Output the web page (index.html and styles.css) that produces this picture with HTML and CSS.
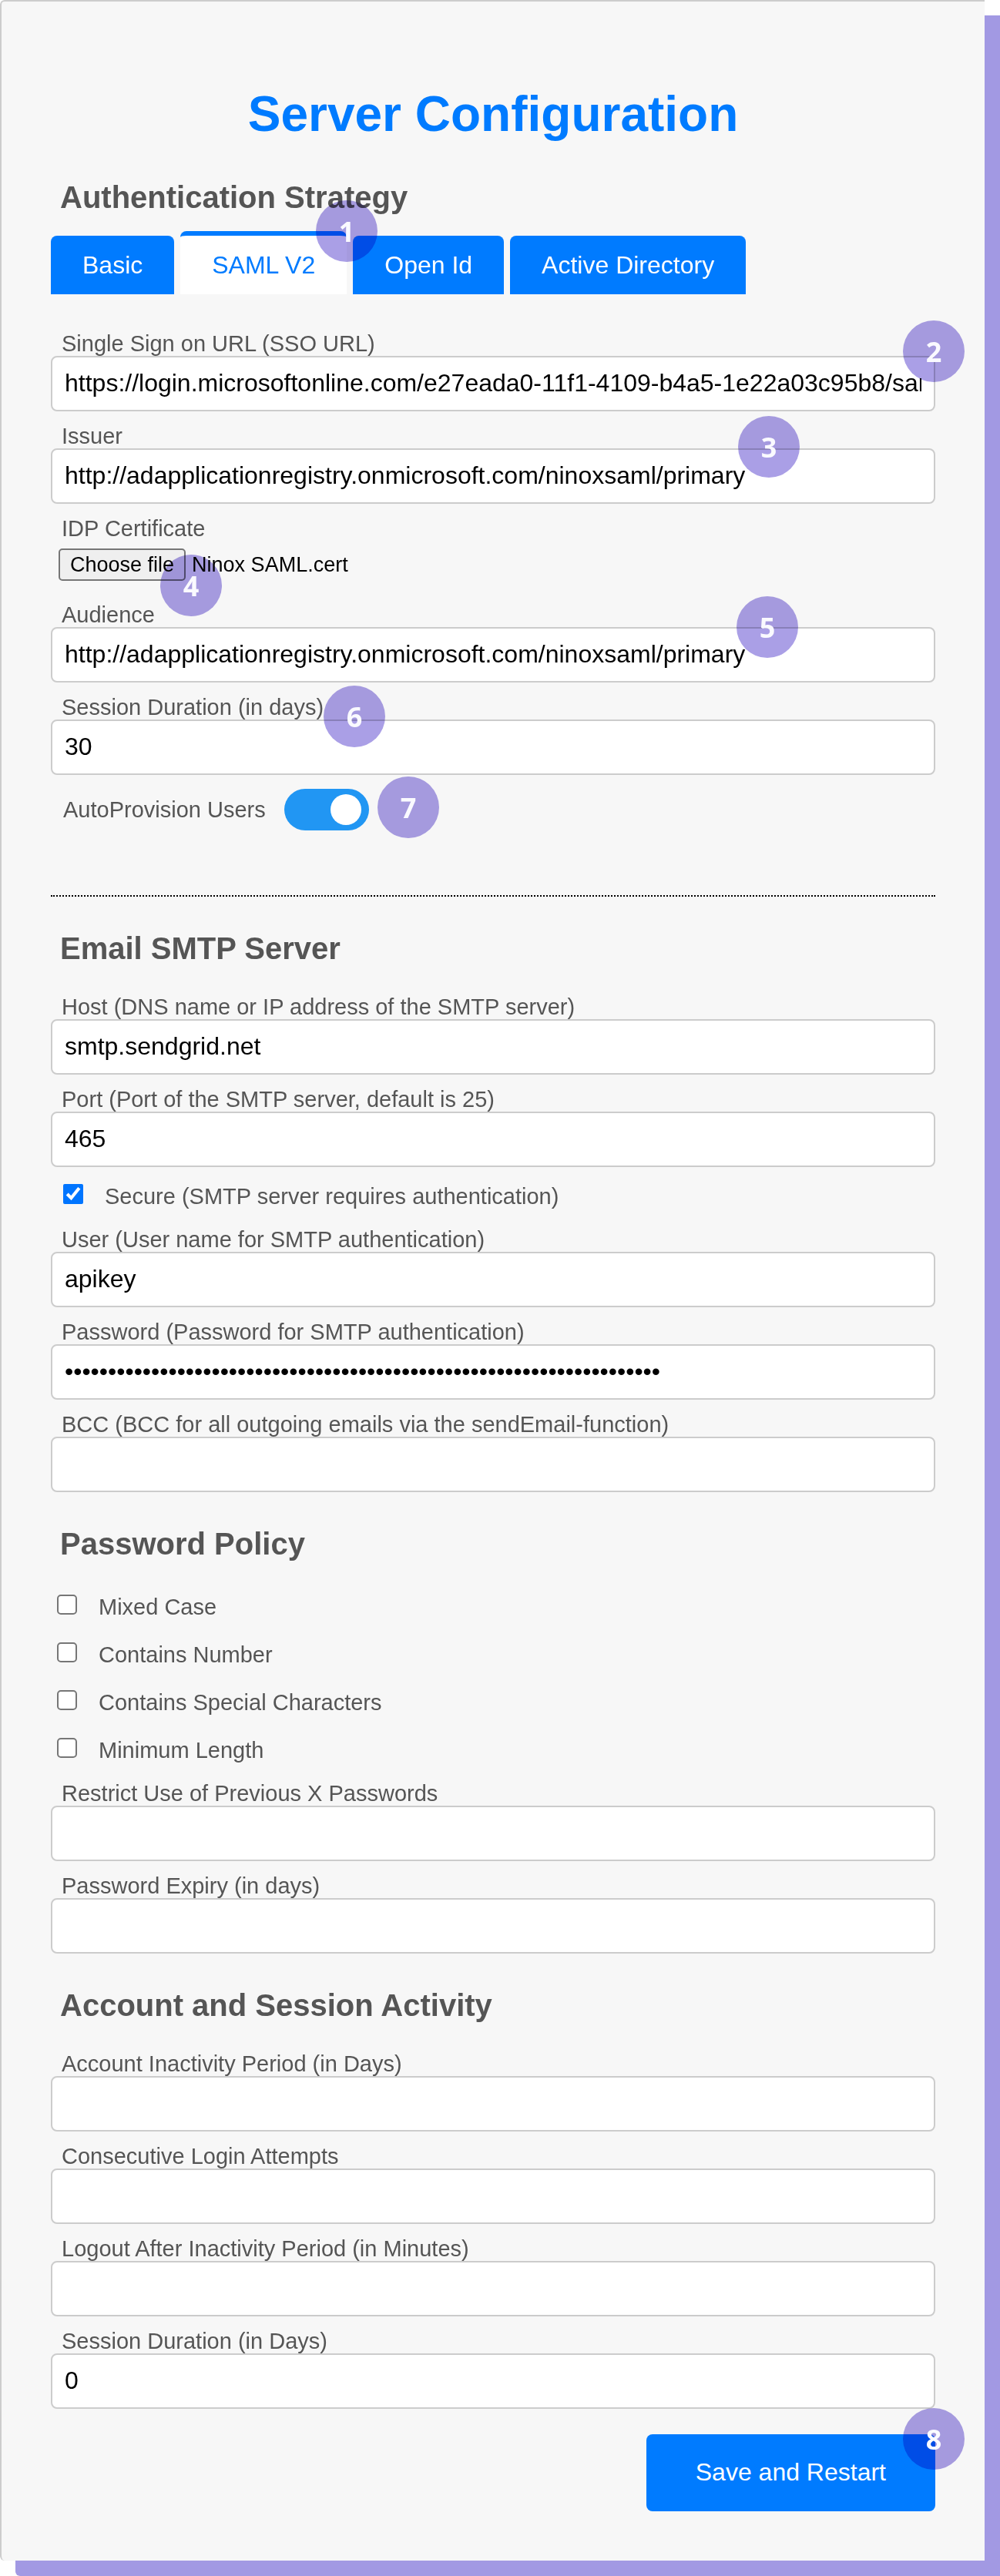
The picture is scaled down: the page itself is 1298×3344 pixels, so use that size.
FILE: index.html
```html
<!DOCTYPE html>
<html lang="en">
  <head>
    <meta charset="UTF-8" />
    <meta name="viewport" content="width=device-width, initial-scale=1.0" />
    <title>Server Configuration</title>
    <link rel="stylesheet" href="styles.css">
  </head>
  <body>
    <form class="card">
      <h1>Server Configuration</h1>

      <h2>Authentication Strategy</h2>
      <div class="tabs">
        <button type="button" class="tab">Basic</button>
        <button type="button" class="tab active">SAML V2</button>
        <button type="button" class="tab">Open Id</button>
        <button type="button" class="tab">Active Directory</button>
        <span class="badge badge-tabs"><b>1</b></span>
      </div>

      <div class="field">
        <label for="ssoUrl">Single Sign on URL (SSO URL)</label>
        <input type="text" id="ssoUrl" value="https://login.microsoftonline.com/e27eada0-11f1-4109-b4a5-1e22a03c95b8/saml2" />
        <span class="badge badge-sso"><b>2</b></span>
      </div>
      <div class="field">
        <label for="issuer">Issuer</label>
        <input type="text" id="issuer" value="http://adapplicationregistry.onmicrosoft.com/ninoxsaml/primary" />
        <span class="badge badge-issuer"><b>3</b></span>
      </div>
      <div class="field">
        <label for="idpCert">IDP Certificate</label>
        <div class="file-row">
          <input type="file" id="idpCert" class="file-input" />
          <label for="idpCert" class="file-btn">Choose file</label>
          <span class="file-name">Ninox SAML.cert</span>
        </div>
        <span class="badge badge-cert"><b>4</b></span>
      </div>
      <div class="field">
        <label for="audience">Audience</label>
        <input type="text" id="audience" value="http://adapplicationregistry.onmicrosoft.com/ninoxsaml/primary" />
        <span class="badge badge-audience"><b>5</b></span>
      </div>
      <div class="field">
        <label for="samlSession">Session Duration (in days)</label>
        <input type="text" id="samlSession" value="30" />
        <span class="badge badge-session"><b>6</b></span>
      </div>
      <div class="switch-row">
        <label for="autoProvision">AutoProvision Users</label>
        <input type="checkbox" id="autoProvision" class="switch" checked />
        <span class="badge badge-provision"><b>7</b></span>
      </div>

      <hr />

      <h2>Email SMTP Server</h2>
      <div class="field">
        <label for="host">Host (DNS name or IP address of the SMTP server)</label>
        <input type="text" id="host" value="smtp.sendgrid.net" />
      </div>
      <div class="field">
        <label for="port">Port (Port of the SMTP server, default is 25)</label>
        <input type="text" id="port" value="465" />
      </div>
      <div class="check-row indent">
        <input type="checkbox" id="secure" checked />
        <label for="secure">Secure (SMTP server requires authentication)</label>
      </div>
      <div class="field">
        <label for="user">User (User name for SMTP authentication)</label>
        <input type="text" id="user" value="apikey" />
      </div>
      <div class="field">
        <label for="password">Password (Password for SMTP authentication)</label>
        <input type="password" id="password" value="123456789012345678901234567890123456789012345678901234567890123456789" />
      </div>
      <div class="field">
        <label for="bcc">BCC (BCC for all outgoing emails via the sendEmail-function)</label>
        <input type="text" id="bcc" />
      </div>

      <h2>Password Policy</h2>
      <div class="check-row">
        <input type="checkbox" id="mixedCase" />
        <label for="mixedCase">Mixed Case</label>
      </div>
      <div class="check-row">
        <input type="checkbox" id="containsNumber" />
        <label for="containsNumber">Contains Number</label>
      </div>
      <div class="check-row">
        <input type="checkbox" id="specialChars" />
        <label for="specialChars">Contains Special Characters</label>
      </div>
      <div class="check-row">
        <input type="checkbox" id="minLength" />
        <label for="minLength">Minimum Length</label>
      </div>
      <div class="field">
        <label for="restrictUse">Restrict Use of Previous X Passwords</label>
        <input type="text" id="restrictUse" />
      </div>
      <div class="field">
        <label for="expiry">Password Expiry (in days)</label>
        <input type="text" id="expiry" />
      </div>

      <h2>Account and Session Activity</h2>
      <div class="field">
        <label for="inactivity">Account Inactivity Period (in Days)</label>
        <input type="text" id="inactivity" />
      </div>
      <div class="field">
        <label for="loginAttempts">Consecutive Login Attempts</label>
        <input type="text" id="loginAttempts" />
      </div>
      <div class="field">
        <label for="logoutAfter">Logout After Inactivity Period (in Minutes)</label>
        <input type="text" id="logoutAfter" />
      </div>
      <div class="field">
        <label for="sessionDuration">Session Duration (in Days)</label>
        <input type="text" id="sessionDuration" value="0" />
      </div>

      <div class="actions">
        <button type="submit" class="save-btn">Save and Restart</button>
        <span class="badge badge-save"><b>8</b></span>
      </div>
    </form>
  </body>
</html>
```

FILE: styles.css
```css
* {
  box-sizing: border-box;
}

body {
  margin: 0;
  padding: 0 20px 20px 0;
  background-color: #fff;
  font-family: "Liberation Sans", Arial, Helvetica, sans-serif;
  color: #555;
}

.card {
  padding: 110px 64px 64px;
  border-top: 2px solid #ccc;
  border-left: 2px solid #ccc;
  border-radius: 6px 0 0 6px;
  background-color: #f7f7f7;
  box-shadow: 20px 20px 0 #a299e3;
}

h1 {
  margin: 0 0 48px;
  font-size: 64px;
  line-height: 72px;
  text-align: center;
  color: #007bff;
}

h2 {
  margin: 43px 0 20px;
  padding-left: 12px;
  font-size: 40px;
  line-height: 48px;
}

label {
  font-size: 29px;
  line-height: 32px;
}

hr {
  margin: 84px 0 0;
  border: none;
  border-top: 2px dotted #000;
}

/* Tabs */
.tabs {
  position: relative;
  display: flex;
  align-items: flex-end;
  gap: 8px;
  margin-bottom: 32px;
}

.tab {
  padding: 20px 41px;
  border: none;
  border-radius: 8px 8px 0 0;
  background-color: #007bff;
  color: #fff;
  font-family: inherit;
  font-size: 32px;
  line-height: 36px;
  cursor: pointer;
}

.tab.active {
  border-top: 6px solid #007bff;
  background-color: #fff;
  color: #007bff;
}

/* Form fields */
.field {
  position: relative;
  padding-top: 16px;
}

.field > label {
  display: block;
  padding-left: 14px;
}

.field > input {
  display: block;
  width: 100%;
  height: 72px;
  padding: 0 16px 2px;
  border: 2px solid #ccc;
  border-radius: 8px;
  background-color: #fff;
  color: #000;
  font-family: inherit;
  font-size: 32px;
}

.file-row {
  display: flex;
  align-items: center;
  gap: 8px;
  padding: 10px 0 12px 10px;
  color: #000;
}

/* the label below works as its button */
.file-input {
  position: absolute;
  width: 1px;
  height: 1px;
  opacity: 0;
}

.file-btn {
  padding: 3px 13px;
  border: 2px solid #767676;
  border-radius: 5px;
  background-color: #efefef;
  cursor: pointer;
}

.file-btn,
.file-name {
  font-size: 27px;
  line-height: 32px;
}

.check-row {
  display: flex;
  align-items: flex-start;
  gap: 28px;
  padding: 22px 0 8px 8px;
}

.check-row.indent {
  padding-left: 16px;
}

.check-row input {
  width: 26px;
  height: 26px;
  margin: 0;
  accent-color: #0075ff;
}

.check-row input:not(:checked) {
  appearance: none;
  border: 2px solid #767676;
  border-radius: 5px;
  background-color: #fff;
}

/* Toggle switch */
.switch-row {
  position: relative;
  display: flex;
  align-items: center;
  gap: 24px;
  margin-top: 18px;
  padding-left: 16px;
}

.switch {
  appearance: none;
  display: flex;
  align-items: center;
  width: 110px;
  height: 54px;
  margin: 0;
  padding: 0 10px;
  border-radius: 27px;
  background-color: #ccc;
  cursor: pointer;
}

.switch::before {
  content: "";
  width: 40px;
  height: 40px;
  border-radius: 50%;
  background-color: #fff;
}

.switch:checked {
  justify-content: flex-end;
  background-color: #2196f3;
}

.actions {
  position: relative;
  display: flex;
  justify-content: flex-end;
  margin-top: 33px;
}

.save-btn {
  padding: 31px 64px 33px;
  border: none;
  border-radius: 8px;
  background-color: #007bff;
  color: #fff;
  font-family: inherit;
  font-size: 32px;
  line-height: 36px;
  cursor: pointer;
}

/* Numbered markers */
.badge {
  position: absolute;
  display: flex;
  align-items: center;
  justify-content: center;
  width: 80px;
  height: 80px;
  color: #fafaff;
  font-family: "Open Sans", sans-serif;
  font-size: 36px;
  pointer-events: none;
}

.badge::before {
  content: "";
  position: absolute;
  inset: 0;
  border-radius: 50%;
  background-color: #aa9fe6;
  mix-blend-mode: multiply;
}

.badge b {
  position: relative;
  font-weight: 700;
}

.badge-tabs {
  top: -40px;
  left: 344px;
}

.badge-sso {
  top: 2px;
  right: -38px;
}

.badge-issuer {
  top: 6px;
  left: 892px;
}

.badge-cert {
  top: 66px;
  left: 142px;
}

.badge-audience {
  top: 8px;
  left: 890px;
}

.badge-session {
  top: 4px;
  left: 354px;
}

.badge-provision {
  top: -16px;
  left: 424px;
}

.badge-save {
  top: -34px;
  right: -38px;
}
```
